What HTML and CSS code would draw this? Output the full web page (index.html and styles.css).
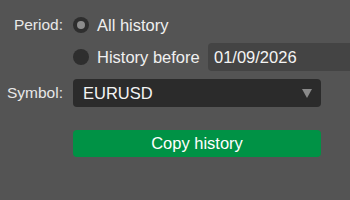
FILE: index.html
```html
<!DOCTYPE html>
<html>
<head>
<meta charset="utf-8">
<link rel="stylesheet" href="styles.css">
</head>
<body>
<div class="form">
  <div class="label row1">Period:</div>
  <div class="field row1">
    <span class="radio checked"></span><span class="opt">All history</span>
  </div>
  <div class="label row2"></div>
  <div class="field row2">
    <span class="radio"></span><span class="opt">History before</span>
    <div class="date">01/09/2026</div>
  </div>
  <div class="label row3">Symbol:</div>
  <div class="field row3">
    <div class="select"><span>EURUSD</span><span class="arrow"></span></div>
  </div>
  <div class="label row4"></div>
  <div class="field row4">
    <div class="button">Copy history</div>
  </div>
</div>
</body>
</html>
```
FILE: styles.css
```css
html, body {
  margin: 0;
  padding: 0;
  width: 350px;
  height: 200px;
  overflow: hidden;
  background: #545454;
  font-family: "Liberation Sans", Arial, sans-serif;
  font-size: 16.5px;
  color: #ffffff;
}
.form {
  display: grid;
  grid-template-columns: 63px 277px;
  column-gap: 10px;
  padding-top: 11px;
}
.label {
  height: 28px;
  display: flex;
  align-items: center;
  justify-content: flex-end;
  color: #e8e8e8;
  font-size: 15.5px;
}
.field {
  height: 28px;
  display: flex;
  align-items: center;
  white-space: nowrap;
}
.row2 { margin-top: 4px; }
.row3 { margin-top: 8px; }
.row4 { margin-top: 23px; height: 27px; }
.radio {
  width: 16px;
  height: 16px;
  border-radius: 50%;
  background: #2e2e2e;
  flex: none;
  display: flex;
  align-items: center;
  justify-content: center;
  margin-right: 8px;
}
.radio.checked::after {
  content: "";
  width: 8px;
  height: 8px;
  border-radius: 50%;
  background: #8c8c8c;
}
.opt {
  color: #f0f0f0;
}
.date {
  margin-left: auto;
  flex: none;
  width: 142px;
  height: 28px;
  box-sizing: border-box;
  padding-left: 6px;
  display: flex;
  align-items: center;
  background: #444444;
  border-radius: 4px 0 0 4px;
  color: #f4f4f4;
}
.select {
  width: 248px;
  height: 28px;
  box-sizing: border-box;
  padding: 0 9px 0 10px;
  display: flex;
  align-items: center;
  justify-content: space-between;
  background: #2b2b2b;
  border-radius: 4px;
  color: #f4f4f4;
}
.arrow {
  width: 0;
  height: 0;
  border-left: 5px solid transparent;
  border-right: 5px solid transparent;
  border-top: 9px solid #8a8a8a;
}
.button {
  width: 248px;
  height: 27px;
  background: #009245;
  border-radius: 4px;
  display: flex;
  align-items: center;
  justify-content: center;
  color: #ffffff;
}
```
